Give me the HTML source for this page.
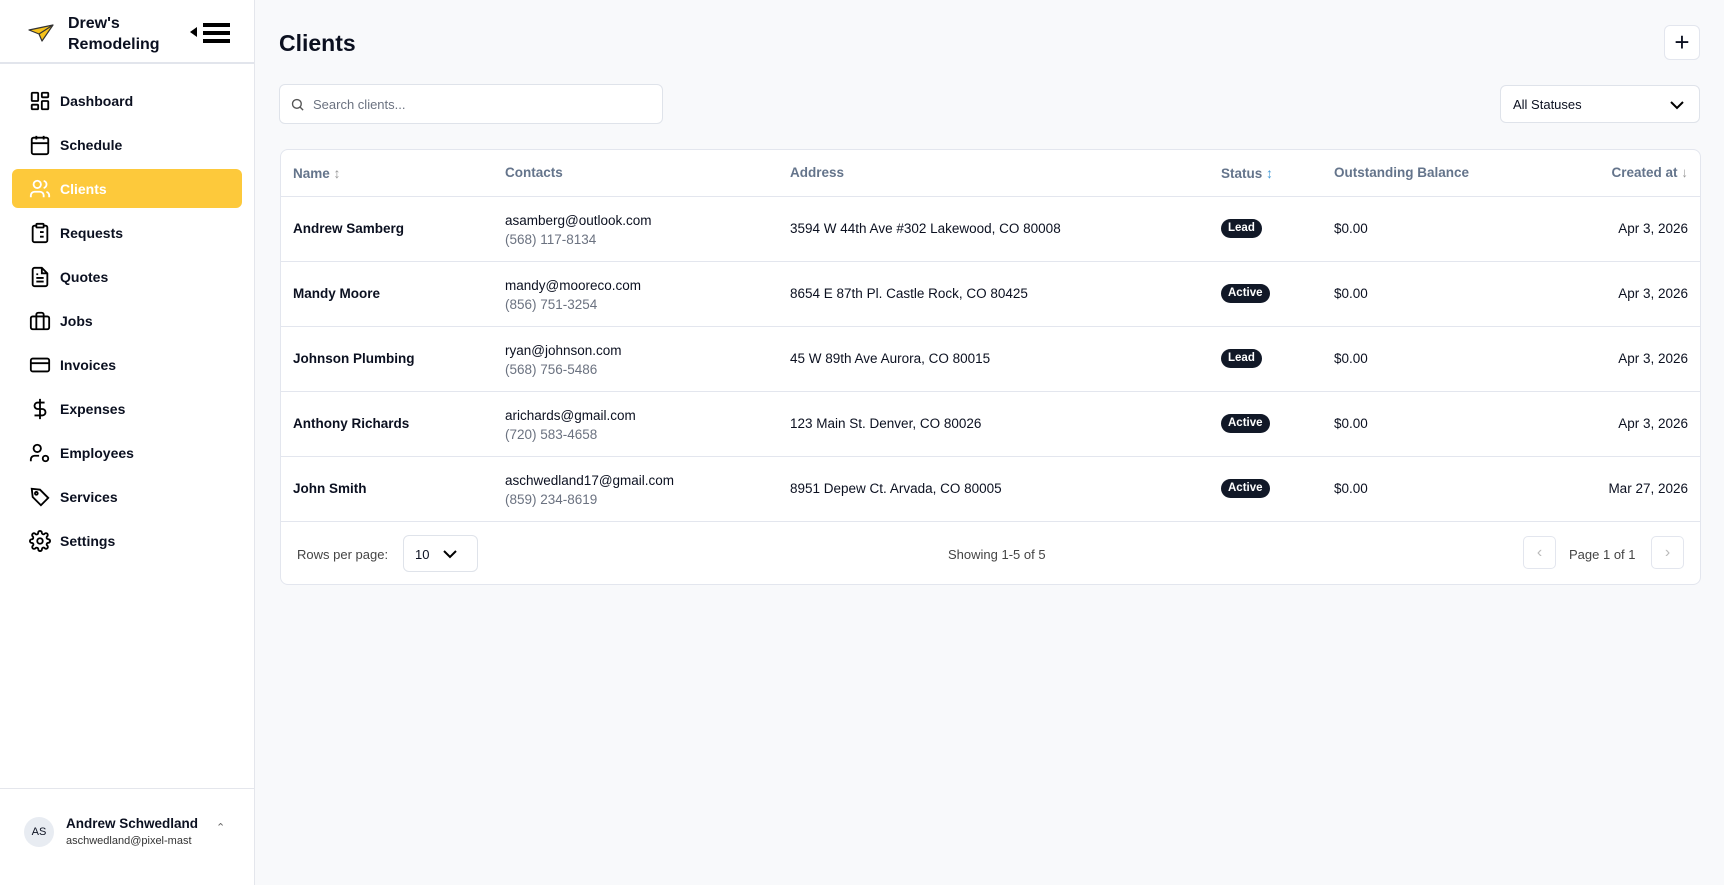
<!DOCTYPE html>
<html><head><meta charset="utf-8"><style>
*{box-sizing:border-box;margin:0;padding:0}
body{width:1724px;height:885px;overflow:hidden;background:#f8f9fb;font-family:"Liberation Sans",sans-serif;color:#0b1020;position:relative}
.side{position:absolute;left:0;top:0;width:255px;height:885px;background:#fff;border-right:1px solid #e4e6ec}
.brand{position:absolute;left:0;top:0;width:254px;height:64px;border-bottom:2px solid #e2e5ec}
.brand .t{position:absolute;left:68px;top:13px;font-size:16px;line-height:21px;font-weight:600}
.nav{position:absolute;left:12px;width:230px;height:39px;border-radius:6px;display:flex;align-items:center;font-size:14px;font-weight:bold}
.nav svg{position:absolute;left:17px;width:22px;height:22px}
.nav span{position:absolute;left:48px}
.nav.act{background:#fdc93b;color:#fff}
.user{position:absolute;left:0;top:788px;width:254px;border-top:1px solid #e4e6ec;height:97px}
h1{position:absolute;left:279px;top:30px;font-size:23px;font-weight:bold}
.card{position:absolute;left:280px;top:149px;width:1421px;height:436px;background:#fff;border:1px solid #e3e6ee;border-radius:8px}
.row{position:absolute;left:0;width:1419px;border-bottom:1px solid #e3e6ee;font-size:13.5px}
.c{position:absolute}
.hd{color:#64748b;font-size:13.5px;font-weight:600}
.badge{display:inline-block;background:#111827;color:#fff;font-size:11.5px;font-weight:bold;border-radius:10px;padding:0 7px;height:19px;line-height:19px}
.gray{color:#6b7280}
</style></head><body>
<div class="side">
 <div class="brand">
  <svg style="position:absolute;left:28px;top:24px" width="26" height="18" viewBox="0 0 26 18"><path d="M1 6 L25 1 L14 17 L11 10 Z" fill="#f6c21b" stroke="#333" stroke-width="1.2" stroke-linejoin="round"/><path d="M11 10 L25 1" stroke="#333" stroke-width="1.2"/></svg>
  <div class="t">Drew's<br>Remodeling</div>
  <svg style="position:absolute;left:190px;top:22px" width="42" height="24" viewBox="0 0 42 24"><path d="M0 10 L7 5 L7 15Z" fill="#000"/><rect x="13" y="1" width="27" height="4" fill="#000"/><rect x="13" y="9" width="27" height="4" fill="#000"/><rect x="13" y="17" width="27" height="4" fill="#000"/></svg>
 </div>
 <div class="nav" style="top:81px"><svg viewBox="0 0 24 24" fill="none" stroke="#000" stroke-width="2"><rect x="3" y="3" width="7" height="9" rx="1"/><rect x="14" y="3" width="7" height="5" rx="1"/><rect x="14" y="12" width="7" height="9" rx="1"/><rect x="3" y="16" width="7" height="5" rx="1"/></svg><span>Dashboard</span></div>
 <div class="nav" style="top:125px"><svg viewBox="0 0 24 24" fill="none" stroke="#000" stroke-width="2"><rect x="3" y="4" width="18" height="18" rx="2"/><path d="M16 2v4M8 2v4M3 10h18"/></svg><span>Schedule</span></div>
 <div class="nav act" style="top:169px"><svg viewBox="0 0 24 24" fill="none" stroke="#fff" stroke-width="2"><path d="M16 21v-2a4 4 0 0 0-4-4H6a4 4 0 0 0-4 4v2"/><circle cx="9" cy="7" r="4"/><path d="M22 21v-2a4 4 0 0 0-3-3.9M16 3.1a4 4 0 0 1 0 7.8"/></svg><span>Clients</span></div>
 <div class="nav" style="top:213px"><svg viewBox="0 0 24 24" fill="none" stroke="#000" stroke-width="2"><rect x="8" y="2" width="8" height="4" rx="1"/><path d="M16 4h2a2 2 0 0 1 2 2v14a2 2 0 0 1-2 2H6a2 2 0 0 1-2-2V6a2 2 0 0 1 2-2h2M12 11h4M12 16h4M8 11h.01M8 16h.01"/></svg><span>Requests</span></div>
 <div class="nav" style="top:257px"><svg viewBox="0 0 24 24" fill="none" stroke="#000" stroke-width="2"><path d="M14 2H6a2 2 0 0 0-2 2v16a2 2 0 0 0 2 2h12a2 2 0 0 0 2-2V8z"/><path d="M14 2v6h6M16 13H8M16 17H8M10 9H8"/></svg><span>Quotes</span></div>
 <div class="nav" style="top:301px"><svg viewBox="0 0 24 24" fill="none" stroke="#000" stroke-width="2"><rect x="2" y="7" width="20" height="14" rx="2"/><path d="M16 21V5a2 2 0 0 0-2-2h-4a2 2 0 0 0-2 2v16"/></svg><span>Jobs</span></div>
 <div class="nav" style="top:345px"><svg viewBox="0 0 24 24" fill="none" stroke="#000" stroke-width="2"><rect x="2" y="5" width="20" height="14" rx="2"/><path d="M2 10h20"/></svg><span>Invoices</span></div>
 <div class="nav" style="top:389px"><svg viewBox="0 0 24 24" fill="none" stroke="#000" stroke-width="2"><path d="M12 1v22M17 5H9.5a3.5 3.5 0 0 0 0 7h5a3.5 3.5 0 0 1 0 7H6"/></svg><span>Expenses</span></div>
 <div class="nav" style="top:433px"><svg viewBox="0 0 24 24" fill="none" stroke="#000" stroke-width="2"><circle cx="9" cy="7" r="4"/><path d="M2 21v-2a4 4 0 0 1 4-4h5"/><circle cx="18" cy="18" r="3"/></svg><span>Employees</span></div>
 <div class="nav" style="top:477px"><svg viewBox="0 0 24 24" fill="none" stroke="#000" stroke-width="2"><path d="M3 3l9 1 9 9-8 8-9-9z"/><circle cx="8" cy="8" r="1.5"/></svg><span>Services</span></div>
 <div class="nav" style="top:521px"><svg viewBox="0 0 24 24" fill="none" stroke="#000" stroke-width="2"><circle cx="12" cy="12" r="3"/><path d="M19.4 15a1.7 1.7 0 0 0 .3 1.8l.1.1a2 2 0 1 1-2.8 2.8l-.1-.1a1.7 1.7 0 0 0-1.8-.3 1.7 1.7 0 0 0-1 1.5V21a2 2 0 1 1-4 0v-.1a1.7 1.7 0 0 0-1.1-1.5 1.7 1.7 0 0 0-1.8.3l-.1.1a2 2 0 1 1-2.8-2.8l.1-.1a1.7 1.7 0 0 0 .3-1.8 1.7 1.7 0 0 0-1.5-1H3a2 2 0 1 1 0-4h.1a1.7 1.7 0 0 0 1.5-1.1 1.7 1.7 0 0 0-.3-1.8l-.1-.1a2 2 0 1 1 2.8-2.8l.1.1a1.7 1.7 0 0 0 1.8.3H9a1.7 1.7 0 0 0 1-1.5V3a2 2 0 1 1 4 0v.1a1.7 1.7 0 0 0 1 1.5 1.7 1.7 0 0 0 1.8-.3l.1-.1a2 2 0 1 1 2.8 2.8l-.1.1a1.7 1.7 0 0 0-.3 1.8V9a1.7 1.7 0 0 0 1.5 1H21a2 2 0 1 1 0 4h-.1a1.7 1.7 0 0 0-1.5 1z"/></svg><span>Settings</span></div>
 <div class="user">
  <div style="position:absolute;left:24px;top:28px;width:30px;height:30px;border-radius:50%;background:#e8ecf2;font-size:11px;display:flex;align-items:center;justify-content:center">AS</div>
  <div style="position:absolute;left:66px;top:27px;font-size:13.5px;font-weight:bold">Andrew Schwedland</div>
  <div style="position:absolute;left:66px;top:46px;font-size:11px;color:#333;width:135px;overflow:hidden;white-space:nowrap">aschwedland@pixel-mast</div>
  <div style="position:absolute;left:216px;top:32px;font-size:11px;color:#666">&#8963;</div>
 </div>
</div>
<h1>Clients</h1>
<div style="position:absolute;left:1664px;top:25px;width:36px;height:35px;border:1px solid #e3e6ee;border-radius:6px;background:#fff;font-size:26px;text-align:center;line-height:32px">+</div>
<div style="position:absolute;left:279px;top:84px;width:384px;height:40px;border:1px solid #dfe3ea;border-radius:6px;background:#fff">
 <svg style="position:absolute;left:10px;top:12px" width="15" height="15" viewBox="0 0 24 24" fill="none" stroke="#555" stroke-width="2.2"><circle cx="11" cy="11" r="7"/><path d="M21 21l-5-5"/></svg>
 <div style="position:absolute;left:33px;top:12px;font-size:13px;color:#6b7280">Search clients...</div>
</div>
<div style="position:absolute;left:1500px;top:85px;width:200px;height:38px;border:1px solid #dfe3ea;border-radius:6px;background:#fff">
 <div style="position:absolute;left:12px;top:11px;font-size:13px">All Statuses</div>
 <svg style="position:absolute;left:168px;top:13px" width="16" height="12" viewBox="0 0 16 12" fill="none" stroke="#000" stroke-width="2"><path d="M2 3l6 6 6-6"/></svg>
</div>
<div class="card">
 <div class="row" style="top:0;height:47px">
  <div class="c hd" style="left:12px;top:15px">Name <span style="color:#999;font-size:14px">↕</span></div>
  <div class="c hd" style="left:224px;top:15px">Contacts</div>
  <div class="c hd" style="left:509px;top:15px">Address</div>
  <div class="c hd" style="left:940px;top:15px">Status <span style="color:#4a9ed8;font-size:14px">↕</span></div>
  <div class="c hd" style="left:1053px;top:15px">Outstanding Balance</div>
  <div class="c hd" style="right:12px;top:15px">Created at <span style="color:#999">↓</span></div>
 </div>
 <div class="row" style="top:47px;height:65px"><div class="c" style="left:12px;top:24px;font-weight:bold">Andrew Samberg</div><div class="c" style="left:224px;top:14px;line-height:19px">asamberg@outlook.com<br><span class="gray">(568) 117-8134</span></div><div class="c" style="left:509px;top:24px">3594 W 44th Ave #302 Lakewood, CO 80008</div><div class="c" style="left:940px;top:22px"><span class="badge">Lead</span></div><div class="c" style="left:1053px;top:24px">$0.00</div><div class="c" style="right:12px;top:24px">Apr 3, 2026</div></div>
 <div class="row" style="top:112px;height:65px"><div class="c" style="left:12px;top:24px;font-weight:bold">Mandy Moore</div><div class="c" style="left:224px;top:14px;line-height:19px">mandy@mooreco.com<br><span class="gray">(856) 751-3254</span></div><div class="c" style="left:509px;top:24px">8654 E 87th Pl. Castle Rock, CO 80425</div><div class="c" style="left:940px;top:22px"><span class="badge">Active</span></div><div class="c" style="left:1053px;top:24px">$0.00</div><div class="c" style="right:12px;top:24px">Apr 3, 2026</div></div>
 <div class="row" style="top:177px;height:65px"><div class="c" style="left:12px;top:24px;font-weight:bold">Johnson Plumbing</div><div class="c" style="left:224px;top:14px;line-height:19px">ryan@johnson.com<br><span class="gray">(568) 756-5486</span></div><div class="c" style="left:509px;top:24px">45 W 89th Ave Aurora, CO 80015</div><div class="c" style="left:940px;top:22px"><span class="badge">Lead</span></div><div class="c" style="left:1053px;top:24px">$0.00</div><div class="c" style="right:12px;top:24px">Apr 3, 2026</div></div>
 <div class="row" style="top:242px;height:65px"><div class="c" style="left:12px;top:24px;font-weight:bold">Anthony Richards</div><div class="c" style="left:224px;top:14px;line-height:19px">arichards@gmail.com<br><span class="gray">(720) 583-4658</span></div><div class="c" style="left:509px;top:24px">123 Main St. Denver, CO 80026</div><div class="c" style="left:940px;top:22px"><span class="badge">Active</span></div><div class="c" style="left:1053px;top:24px">$0.00</div><div class="c" style="right:12px;top:24px">Apr 3, 2026</div></div>
 <div class="row" style="top:307px;height:65px"><div class="c" style="left:12px;top:24px;font-weight:bold">John Smith</div><div class="c" style="left:224px;top:14px;line-height:19px">aschwedland17@gmail.com<br><span class="gray">(859) 234-8619</span></div><div class="c" style="left:509px;top:24px">8951 Depew Ct. Arvada, CO 80005</div><div class="c" style="left:940px;top:22px"><span class="badge">Active</span></div><div class="c" style="left:1053px;top:24px">$0.00</div><div class="c" style="right:12px;top:24px">Mar 27, 2026</div></div>
 <div class="c" style="left:16px;top:397px;font-size:13px;color:#444">Rows per page:</div>
 <div class="c" style="left:122px;top:385px;width:75px;height:37px;border:1px solid #dfe3ea;border-radius:6px">
  <div class="c" style="left:11px;top:11px;font-size:13px">10</div>
  <svg style="position:absolute;left:38px;top:12px" width="16" height="12" viewBox="0 0 16 12" fill="none" stroke="#000" stroke-width="2"><path d="M2 3l6 6 6-6"/></svg>
 </div>
 <div class="c" style="left:667px;top:397px;font-size:13px;color:#444">Showing 1-5 of 5</div>
 <div class="c" style="left:1242px;top:386px;width:33px;height:33px;border:1px solid #e3e6ee;border-radius:5px;color:#bbb;text-align:center;line-height:31px;font-size:16px">&#8249;</div>
 <div class="c" style="left:1288px;top:397px;font-size:13px;color:#444">Page 1 of 1</div>
 <div class="c" style="left:1370px;top:386px;width:33px;height:33px;border:1px solid #e3e6ee;border-radius:5px;color:#bbb;text-align:center;line-height:31px;font-size:16px">&#8250;</div>
</div>
</body></html>
